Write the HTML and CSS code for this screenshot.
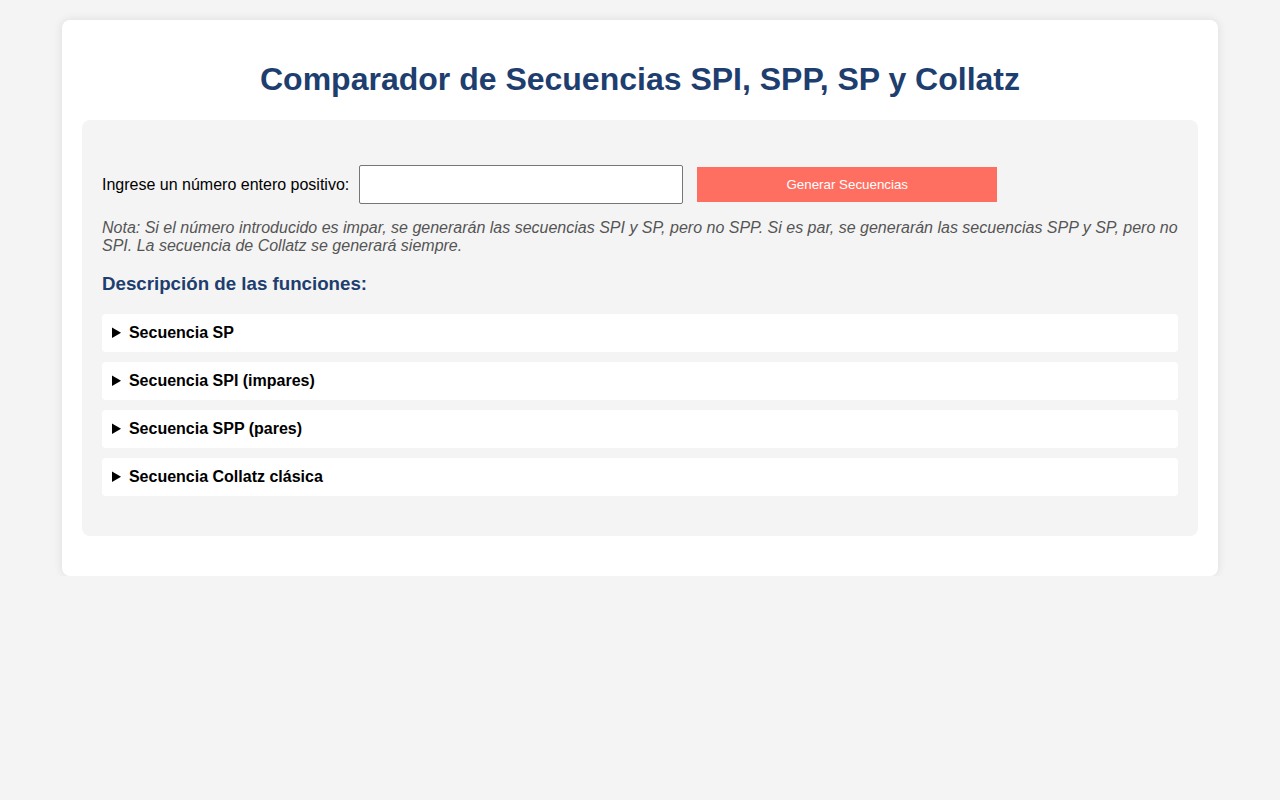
FILE: index.html
```html
<!DOCTYPE html>
<html lang="es">
<head>
<meta charset="utf-8">
<title>Comparador de Secuencias</title>
<link rel="stylesheet" href="styles.css">
</head>
<body>
<div class="container">
  <h1 class="title">Comparador de Secuencias SPI, SPP, SP y Collatz</h1>
  <div class="panel">
    <div class="input-row">
      <label class="label" for="num">Ingrese un número entero positivo:</label>
      <input class="num-input" id="num" type="number">
      <button class="btn">Generar Secuencias</button>
    </div>
    <p class="note">Nota: Si el número introducido es impar, se generarán las secuencias SPI y SP, pero no SPP. Si es par, se generarán las secuencias SPP y SP, pero no SPI. La secuencia de Collatz se generará siempre.</p>
    <h3 class="subtitle">Descripción de las funciones:</h3>
    <details class="item"><summary class="item-sum">Secuencia SP</summary></details>
    <details class="item"><summary class="item-sum">Secuencia SPI (impares)</summary></details>
    <details class="item"><summary class="item-sum">Secuencia SPP (pares)</summary></details>
    <details class="item"><summary class="item-sum">Secuencia Collatz clásica</summary></details>
  </div>
</div>
</body>
</html>
```
FILE: styles.css
```css
html, body {
  margin: 0;
  padding: 0;
}
body {
  background: #f4f4f4;
  font-family: "Liberation Sans", Arial, sans-serif;
  color: #000;
  padding-top: 20px;
}
.container {
  width: 1156px;
  box-sizing: border-box;
  margin: 0 auto;
  background: #fff;
  border-radius: 8px;
  box-shadow: 0 0 10px rgba(0, 0, 0, 0.1);
  padding: 20px 20px 40px;
}
.title {
  text-align: center;
  color: #1d3e6e;
  font-size: 32px;
  margin: 21px 0 22px;
  line-height: 37px;
}
.panel {
  background: #f4f4f4;
  border-radius: 8px;
  padding: 20px 20px 30px;
}
.input-row {
  display: flex;
  align-items: center;
  margin-top: 25px;
  margin-bottom: 15px;
}
.label {
  font-size: 16px;
  margin-right: 10px;
}
.num-input {
  width: 324px;
  height: 39px;
  box-sizing: border-box;
  border: 1px solid #767676;
  border-radius: 2px;
  background: #fff;
  margin: 0;
  font-size: 16px;
}
.btn {
  margin-left: 14px;
  width: 300px;
  height: 35px;
  border: none;
  background: #ff6f61;
  color: #fff;
  font-family: "Liberation Sans", Arial, sans-serif;
  font-size: 13.33px;
}
.note {
  margin: 0;
  font-style: italic;
  color: #555;
  font-size: 16px;
  line-height: 18px;
}
.subtitle {
  color: #1d3e6e;
  font-size: 18.72px;
  margin: 18px 0 18.72px;
}
.item {
  background: #fff;
  border-radius: 4px;
  padding: 10px;
  margin-bottom: 10px;
}
.item-sum {
  font-weight: bold;
  font-size: 16px;
  cursor: pointer;
}
```
